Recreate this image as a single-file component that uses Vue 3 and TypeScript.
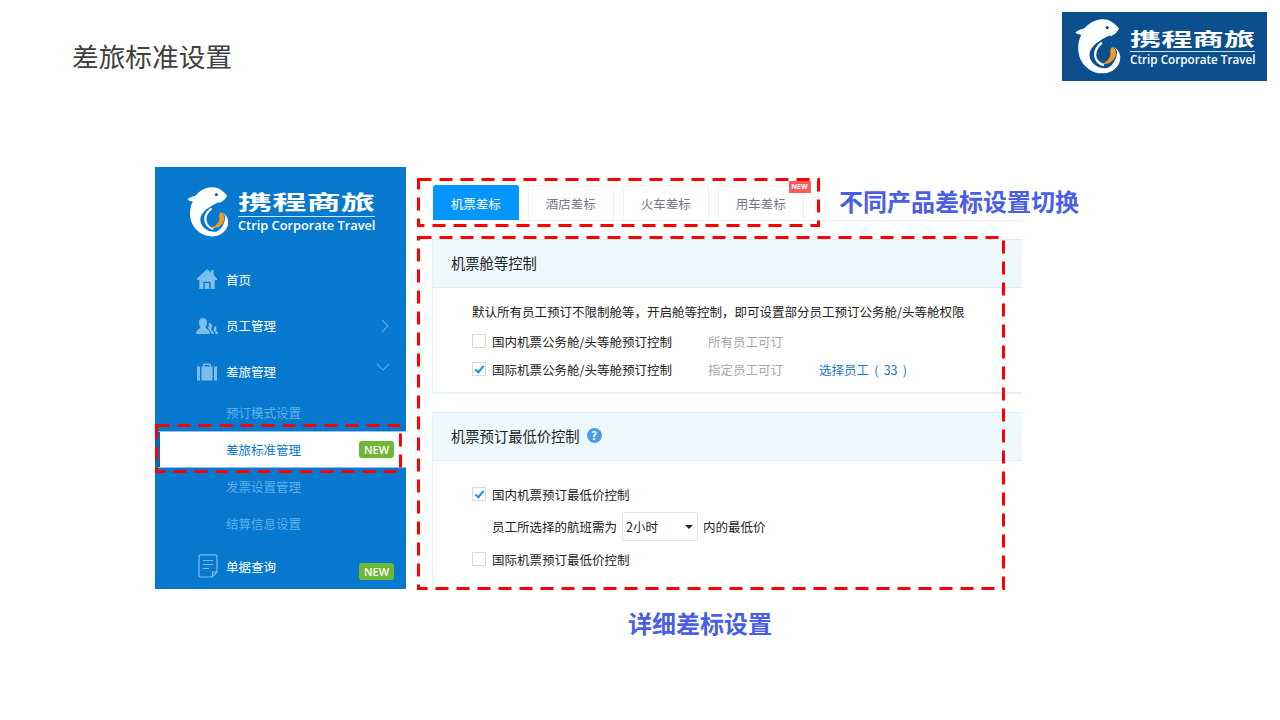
<template>
  <div class="page">
    <!-- 共用的海豚图形 -->
    <svg class="defs" aria-hidden="true">
      <symbol id="dolphin" viewBox="14 16 140 168">
        <path fill="#fff" d="M148 45C135 30 120 15 95 17C75 18 55 30 42 45C32 47 22 50 15 58C22 63 28 64 33 64C22 85 20 115 30 138C42 165 70 183 100 182C130 181 153 160 152 132C151 118 142 104 128 101L120 70C132 66 144 56 148 45Z" />
        <path fill="currentColor" d="M122 66C92 78 58 100 58 125C58 150 85 170 112 166C128 160 140 140 142 118C142 110 135 102 128 101Z" />
        <path fill="none" stroke="#fff" stroke-width="7" d="M96 88C76 104 70 124 80 142C86 150 94 155 102 157" />
        <path fill="#f39a1e" d="M126 102C136 102 141 115 138 127C133 146 115 157 94 154C110 148 122 136 122 122C122 114 120 108 126 102Z" />
        <circle cx="112" cy="42" r="5" fill="#14508f" />
      </symbol>
    </svg>

    <header class="top">
      <h1 class="title">差旅标准设置</h1>
      <div class="top-logo">
        <svg class="top-dolphin"><use href="#dolphin" /></svg>
        <div class="brand">
          <span class="brand-cn">携程商旅</span>
          <span class="brand-en">Ctrip Corporate Travel</span>
        </div>
      </div>
    </header>

    <main class="stage">
      <aside class="sidebar">
        <div class="side-logo">
          <svg class="side-dolphin"><use href="#dolphin" /></svg>
          <div class="brand side-brand">
            <span class="brand-cn">携程商旅</span>
            <span class="brand-en">Ctrip Corporate Travel</span>
          </div>
        </div>

        <div class="nav-row first">
          <svg class="nav-icon" viewBox="0 0 22 22">
            <path fill="#7dbdec" d="M11 0L0 10.500V12H2.500V22H7V14H15V22H19.500V12H22V10.500L18.500 7V1H15.500V4Z" />
            <path fill="#7dbdec" d="M8.500 15.500H13.500V22H8.500Z" />
          </svg>
          <span>首页</span>
        </div>
        <div class="nav-row">
          <svg class="nav-icon" viewBox="0 0 22 16">
            <path fill="#7dbdec" d="M7 0C9.500 0 11 2 11 4.500C11 7 10 8.500 9.500 9.500C10 11 14 11.500 14 16H0C0 11.500 4 11 4.500 9.500C4 8.500 3 7 3 4.500C3 2 4.500 0 7 0ZM13 5C15 5 16 6.500 16 8.500C16 10 15 11 15 11.500C15.500 12.500 18 13 18 16H15.500C15 13 12.500 12 12 10C12.800 8.500 13 7 12.500 5ZM18.500 8C20 8 20.500 9 20.500 10.500C20.500 11.500 20 12 20 12.500C20.500 13.500 22 13.500 22 16H19.500C19.500 14 18 13 17.500 12C18 10.500 18.500 9.500 18.500 8Z" />
          </svg>
          <span>员工管理</span>
          <svg class="chev" viewBox="0 0 8 14"><path d="M1 1L7 7L1 13" /></svg>
        </div>
        <div class="nav-row third">
          <svg class="nav-icon case" viewBox="0 0 20 17">
            <path fill="#7dbdec" d="M0 3H3V17H0ZM17 3H20V17H17ZM4.500 3H6V1C6 .4 6.500 0 7 0H13C13.500 0 14 .4 14 1V3H15.500V17H4.500ZM7.500 3H12.500V1.500H7.500Z" />
          </svg>
          <span>差旅管理</span>
          <svg class="chev down" viewBox="0 0 14 8"><path d="M1 1L7 7L13 1" /></svg>
        </div>

        <div class="sub-list">
          <div v-for="item in subItems" :key="item.label" class="sub-row" :class="{ active: item.active }">
            <span>{{ item.label }}</span>
            <b v-if="item.active" class="badge">NEW</b>
          </div>
          <svg class="dash side-dash"><rect /></svg>
        </div>

        <div class="nav-row last">
          <svg class="nav-icon doc" viewBox="0 0 20 24">
            <path fill="none" stroke="#7dbdec" stroke-width="1.200" d="M2.500 .8H17.500C18.500 .8 19 1.500 19 2.500V18L14 23H2.500C1.500 23 1 22.300 1 21.500V2.500C1 1.500 1.500 .8 2.500 .8ZM19 18H14.500V23M5 6.500H15M5 10.500H15M5 14.500H11" />
          </svg>
          <span>单据查询</span>
          <b class="badge">NEW</b>
        </div>
      </aside>

      <section class="content">
        <div class="tabs-box">
          <div class="tabs">
            <div v-for="(tab, i) in tabs" :key="tab" class="tab" :class="{ active: i === 0 }">
              {{ tab }}
              <i v-if="i === 3" class="tab-new">NEW</i>
            </div>
          </div>
          <svg class="dash"><rect /></svg>
          <span class="note note-top">不同产品差标设置切换</span>
        </div>

        <div class="detail-box">
          <div class="block">
            <div class="block-head">机票舱等控制</div>
            <div class="block-body body-one">
              <p class="desc">默认所有员工预订不限制舱等，开启舱等控制，即可设置部分员工预订公务舱/头等舱权限</p>
              <div class="opt">
                <i class="check"></i>
                <span class="opt-label">国内机票公务舱/头等舱预订控制</span>
                <span class="muted">所有员工可订</span>
              </div>
              <div class="opt">
                <i class="check on"></i>
                <span class="opt-label">国际机票公务舱/头等舱预订控制</span>
                <span class="muted">指定员工可订</span>
                <a class="link">选择员工 ( 33 )</a>
              </div>
            </div>
          </div>

          <div class="block second">
            <div class="block-head">
              机票预订最低价控制
              <i class="help">?</i>
            </div>
            <div class="block-body body-two">
              <div class="opt">
                <i class="check on"></i>
                <span class="opt-label">国内机票预订最低价控制</span>
              </div>
              <div class="opt hours">
                <span>员工所选择的航班需为</span>
                <div class="select">2小时<i class="caret"></i></div>
                <span>内的最低价</span>
              </div>
              <div class="opt">
                <i class="check"></i>
                <span class="opt-label">国际机票预订最低价控制</span>
              </div>
            </div>
          </div>
          <svg class="dash"><rect /></svg>
        </div>
        <div class="note note-bottom">详细差标设置</div>
      </section>
    </main>
  </div>
</template>

<script setup lang="ts">
interface SubItem {
  label: string;
  active?: boolean;
}

const subItems: SubItem[] = [
  { label: "预订模式设置" },
  { label: "差旅标准管理", active: true },
  { label: "发票设置管理" },
  { label: "结算信息设置" },
];

const tabs = ["机票差标", "酒店差标", "火车差标", "用车差标"];
</script>

<style>
body {
  background: #fff;
}
</style>

<style scoped>
.page {
  width: 1280px;
  height: 720px;
  overflow: hidden;
  background: #fff;
  color: #222;
  font-family: "Noto Sans CJK SC", "Noto Sans", sans-serif;
  font-size: 12.5px;
}

.defs {
  position: absolute;
  width: 0;
  height: 0;
}

.top {
  display: flex;
  justify-content: space-between;
  align-items: flex-start;
  height: 81px;
  padding: 12px 13px 0 72px;
  box-sizing: border-box;
}

.title {
  margin: 24px 0 0;
  font-size: 26.700px;
  line-height: 40px;
  font-weight: 400;
  color: #404040;
}

.top-logo {
  display: flex;
  align-items: center;
  gap: 9px;
  width: 205px;
  height: 69px;
  padding-left: 13px;
  box-sizing: border-box;
  background: #0c4f8f;
  color: #0c4f8f;
}

.top-dolphin {
  width: 46px;
  height: 55px;
}

.brand {
  display: flex;
  flex-direction: column;
  width: 125px;
  margin-top: -2px;
  color: #fff;
}

.brand-cn {
  height: 26px;
  font-size: 18.500px;
  line-height: 26px;
  font-weight: 700;
  white-space: nowrap;
  transform: scaleX(1.69);
  transform-origin: left center;
}

.brand-en {
  margin-top: 0;
  border-top: 1px solid #cfe3f5;
  font-family: "Open Sans", sans-serif;
  font-size: 11.700px;
  line-height: 15px;
  font-weight: 600;
  white-space: nowrap;
}

.stage {
  display: flex;
  gap: 11px;
  padding: 86px 0 0 155px;
}

.sidebar {
  position: relative;
  width: 251px;
  height: 422px;
  background: #0679cf;
  color: #fff;
}

.side-logo {
  display: flex;
  align-items: center;
  gap: 8px;
  height: 89px;
  padding: 2px 0 0 31px;
  box-sizing: border-box;
  color: #0679cf;
  border-bottom: 1px solid #0a73c2;
}

.side-dolphin {
  width: 44px;
  height: 50px;
}

.side-brand {
  width: 137px;
  margin-top: -4px;
}

.side-brand .brand-cn {
  height: 29px;
  font-size: 20.500px;
  line-height: 29px;
  transform: scaleX(1.67);
}

.side-brand .brand-en {
  font-size: 12.800px;
  line-height: 17px;
}

.nav-row {
  display: flex;
  align-items: center;
  height: 46px;
  padding-left: 41px;
  box-sizing: border-box;
  border-bottom: 1px solid #0a73c2;
  position: relative;
}

.nav-row.first {
  height: 47px;
}

.nav-row.third {
  height: 45px;
  border-bottom: 0;
}

.nav-row.last {
  height: 47px;
  border-bottom: 0;
  border-top: 1px solid #0a73c2;
}

.nav-icon {
  width: 22px;
  height: 20px;
  margin-right: 8px;
  flex: none;
}

.nav-icon.case {
  width: 20px;
  margin: 0 9px 0 1px;
}

.nav-icon.doc {
  width: 20px;
  height: 24px;
  margin: 0 8px 0 2px;
}

.chev {
  position: absolute;
  right: 17px;
  top: 16px;
  width: 8px;
  height: 14px;
  fill: none;
  stroke: #5aa8e4;
  stroke-width: 1.200;
}

.chev.down {
  right: 16px;
  top: 14px;
  width: 14px;
  height: 8px;
}

.sub-list {
  position: relative;
}

.sub-row {
  display: flex;
  align-items: center;
  height: 37px;
  padding-left: 71px;
  color: #5fb0ea;
}

.sub-row.active {
  box-sizing: border-box;
  padding-left: 66px;
  background: #fff;
  color: #0679cf;
  border-left: 5px solid #0569ab;
  border-top: 1px solid #8cc5ee;
  border-bottom: 1px solid #8cc5ee;
  position: relative;
}

.badge {
  position: absolute;
  right: 12px;
  width: 35px;
  height: 17px;
  border-radius: 3px;
  background: #6fb737;
  color: #fff;
  font-family: "Open Sans", sans-serif;
  font-size: 11px;
  line-height: 17px;
  font-weight: 600;
  text-align: center;
}

.nav-row .badge {
  bottom: 9px;
}

.dash {
  position: absolute;
  left: 0;
  top: 0;
  width: 100%;
  height: 100%;
  overflow: visible;
  pointer-events: none;
}

.dash rect {
  x: 1.5px;
  y: 1.5px;
  width: calc(100% - 3px);
  height: calc(100% - 3px);
  fill: none;
  stroke: #f00;
  stroke-width: 3px;
  stroke-dasharray: 13 8;
}

.side-dash {
  top: 30px;
  width: 247px;
  height: 49px;
}

.content {
  width: 606px;
}

.tabs-box {
  position: relative;
  width: 403px;
  height: 49px;
  margin-top: 11px;
  box-sizing: border-box;
  padding: 7px 0 0 16px;
}

.tabs {
  display: flex;
  gap: 9.500px;
  width: 589px;
  height: 35px;
  border-bottom: 1px solid #eee;
}

.tab {
  position: relative;
  width: 85.500px;
  height: 35px;
  box-sizing: border-box;
  border: 1px solid #f0f0f0;
  border-bottom: 0;
  border-radius: 3px 3px 0 0;
  line-height: 36px;
  text-align: center;
  color: #77778c;
}

.tab.active {
  background: #0496ff;
  border-color: #0496ff;
  color: #fff;
}

.tab-new {
  position: absolute;
  right: -8px;
  top: -5px;
  width: 22px;
  height: 12px;
  background: #ff5b5b;
  color: #fff;
  font-family: "Open Sans", sans-serif;
  font-size: 7px;
  line-height: 12px;
  font-weight: 700;
  font-style: normal;
  text-align: center;
}

.note {
  color: #4a5ee8;
  font-size: 24px;
  line-height: 36px;
  font-weight: 700;
  white-space: nowrap;
}

.note-top {
  position: absolute;
  left: 422px;
  top: 5px;
}

.note-bottom {
  margin: 15px 0 0 211px;
}

.detail-box {
  position: relative;
  width: 588px;
  height: 354px;
  margin-top: 9px;
  padding: 3px 0 0 15px;
  box-sizing: border-box;
}

.block {
  width: 590px;
  box-sizing: border-box;
  border-left: 1px solid #e3f1fb;
}

.block.second {
  margin-top: 18px;
}

.block-head {
  display: flex;
  align-items: center;
  gap: 7px;
  height: 49px;
  padding: 0 0 2px 18px;
  box-sizing: border-box;
  background: #eef8ff;
  border-top: 1px solid #dcedfa;
  border-bottom: 1px solid #dcedfa;
  color: #222;
  font-size: 14.300px;
}

.body-one {
  height: 106px;
  padding: 13px 0 0 39px;
  box-sizing: border-box;
  border-bottom: 2px solid #e3f1fb;
}

.body-two {
  height: 129px;
  padding: 22px 0 0 39px;
  box-sizing: border-box;
}

.desc {
  margin: 0 0 4px;
  line-height: 22px;
  white-space: nowrap;
}

.opt {
  display: flex;
  align-items: center;
  height: 28px;
  white-space: nowrap;
}

.body-two .opt {
  height: 22px;
}

.body-two .opt.hours {
  height: 30px;
  margin: 6px 0 7px 20px;
  gap: 5px;
}

.check {
  position: relative;
  width: 14px;
  height: 14px;
  margin-right: 6px;
  flex: none;
  box-sizing: border-box;
  border: 1px solid #d9d9d9;
  background: #fff;
}

.check.on::after {
  content: "";
  position: absolute;
  left: 4px;
  top: 1px;
  width: 3px;
  height: 7px;
  border: solid #1890ef;
  border-width: 0 2px 2px 0;
  transform: rotate(40deg);
}

.opt-label {
  width: 216px;
}

.muted {
  width: 111px;
  color: #a6a6a6;
}

.link {
  color: #1a78d2;
  word-spacing: 2.400px;
}

.help {
  display: inline-block;
  width: 15px;
  height: 15px;
  border-radius: 50%;
  background: #4d9de6;
  color: #fff;
  font-size: 11px;
  line-height: 15px;
  font-weight: 700;
  font-style: normal;
  text-align: center;
}

.select {
  position: relative;
  width: 76px;
  height: 29px;
  box-sizing: border-box;
  padding-left: 3px;
  border: 1px solid #e2e2e2;
  border-radius: 2px;
  line-height: 27px;
}

.caret {
  position: absolute;
  right: 4px;
  top: 12px;
  border: 4px solid transparent;
  border-top: 4px solid #222;
  border-bottom: 0;
}
</style>
